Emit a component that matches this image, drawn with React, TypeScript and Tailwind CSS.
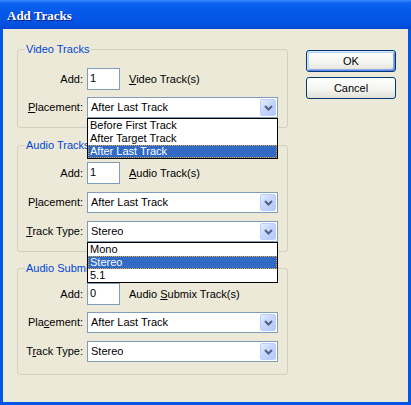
import React from "react";

const FONT = "font-['Liberation_Sans',Arial,sans-serif]";

function U({ children }: { children: React.ReactNode }) {
  return <span className="underline underline-offset-[1px]">{children}</span>;
}

function Chevron() {
  return (
    <svg width="9" height="6" viewBox="0 0 9 6">
      <polyline points="1,1 4.5,4.5 8,1" fill="none" stroke="#4d6185" strokeWidth="2" />
    </svg>
  );
}

function Select({
  value,
  items,
  selected,
}: {
  value: string;
  items?: string[];
  selected?: number;
}) {
  return (
    <div className="relative h-[21px] w-[191px]">
      <div className="flex h-full items-center border border-[#7f9db9] bg-white pl-[3px] pr-[1px]">
        <span className="flex-1 leading-[13px]">{value}</span>
        <div className="flex h-[17px] w-[16px] items-center justify-center rounded-[2px] border border-[#bccffa] bg-[linear-gradient(135deg,#e6eeff_0%,#c6d6fc_45%,#b4c8f8_100%)]">
          <Chevron />
        </div>
      </div>
      {items && (
        <div className="absolute left-0 top-full z-10 w-[191px] border border-black bg-white">
          {items.map((it, i) => (
            <div
              key={it}
              className={
                i === selected
                  ? "h-[13px] border border-dotted border-[#e9a23b] bg-[#316ac5] pl-[1px] leading-[11px] text-white"
                  : "h-[13px] pl-[2px] leading-[13px]"
              }
            >
              {it}
            </div>
          ))}
        </div>
      )}
    </div>
  );
}

function Input({ value }: { value: string }) {
  return (
    <div className="h-[22px] w-[33px] border border-[#7f9db9] bg-white pl-[2px] pt-[3px] leading-[13px]">
      {value}
    </div>
  );
}

function Label({ children }: { children: React.ReactNode }) {
  return <div className="w-[65px] shrink-0 text-right leading-[13px]">{children}</div>;
}

function Group({
  title,
  className,
  children,
}: {
  title: string;
  className: string;
  children: React.ReactNode;
}) {
  return (
    <div className={`rounded-[3px] border border-[#d0d0bf] ${className}`}>
      <div className="-mt-[7px] ml-[7px] w-fit bg-[#ece9d8] px-[1px] leading-[13px] text-[#0046d5]">
        {title}
      </div>
      {children}
    </div>
  );
}

export default function App() {
  return (
    <div className={`${FONT} flex h-[405px] w-[411px] flex-col bg-[#0355e6] text-[11px] text-black`}>
      <div className="flex h-[29px] shrink-0 items-center bg-[linear-gradient(to_bottom,#3a8cfa_0px,#0c64f0_3px,#0558ea_12px,#0454e4_22px,#0349d6_28px)] pl-[7px] pt-[2px]">
        <span className="font-['Liberation_Serif',serif] text-[13px] font-bold text-white [text-shadow:1px_1px_0_#0a1883]">
          Add Tracks
        </span>
      </div>
      <div className="mx-[3px] mb-[3px] flex flex-1 bg-[#ece9d8] pl-[14px]">
        <div className="w-[271px] pt-[20px]">
          <Group title="Video Tracks" className="pb-[9px]">
            <div className="mt-[12px] flex items-center">
              <Label>Add:</Label>
              <div className="ml-[4px]">
                <Input value="1" />
              </div>
              <span className="ml-[9px]">
                <U>V</U>ideo Track(s)
              </span>
            </div>
            <div className="mt-[7px] flex items-center">
              <Label>
                <U>P</U>lacement:
              </Label>
              <div className="ml-[4px]">
                <Select
                  value="After Last Track"
                  items={["Before First Track", "After Target Track", "After Last Track"]}
                  selected={2}
                />
              </div>
            </div>
          </Group>
          <Group title="Audio Tracks" className="mt-[17px] pb-[9px]">
            <div className="mt-[10px] flex items-center">
              <Label>Add:</Label>
              <div className="ml-[4px]">
                <Input value="1" />
              </div>
              <span className="ml-[9px]">
                <U>A</U>udio Track(s)
              </span>
            </div>
            <div className="mt-[8px] flex items-center">
              <Label>
                P<U>l</U>acement:
              </Label>
              <div className="ml-[4px]">
                <Select value="After Last Track" />
              </div>
            </div>
            <div className="mt-[8px] flex items-center">
              <Label>
                <U>T</U>rack Type:
              </Label>
              <div className="ml-[4px]">
                <Select value="Stereo" items={["Mono", "Stereo", "5.1"]} selected={1} />
              </div>
            </div>
          </Group>
          <Group title="Audio Submix Tracks" className="mt-[16px] pb-[12px]">
            <div className="mt-[8px] flex items-center">
              <Label>Add:</Label>
              <div className="ml-[4px]">
                <Input value="0" />
              </div>
              <span className="ml-[9px]">
                Audio <U>S</U>ubmix Track(s)
              </span>
            </div>
            <div className="mt-[7px] flex items-center">
              <Label>
                Pla<U>c</U>ement:
              </Label>
              <div className="ml-[4px]">
                <Select value="After Last Track" />
              </div>
            </div>
            <div className="mt-[8px] flex items-center">
              <Label>
                T<U>r</U>ack Type:
              </Label>
              <div className="ml-[4px]">
                <Select value="Stereo" />
              </div>
            </div>
          </Group>
        </div>
        <div className="ml-[18px] mt-[21px] flex w-[90px] flex-col gap-[5px]">
          <button className="h-[22px] rounded-[3px] border border-[#003c74] bg-[linear-gradient(to_bottom,#ffffff_0%,#f3f3ef_60%,#e2e0d6_100%)] leading-[13px] shadow-[inset_1px_1px_0_#cee7ff,inset_-1px_-1px_0_#6982ee,inset_2px_2px_0_#bcd4f6,inset_-2px_-2px_0_#89ade4]">
            OK
          </button>
          <button className="h-[22px] rounded-[3px] border border-[#003c74] bg-[linear-gradient(to_bottom,#ffffff_0%,#f3f3ef_60%,#e2e0d6_100%)] leading-[13px]">
            Cancel
          </button>
        </div>
      </div>
    </div>
  );
}
